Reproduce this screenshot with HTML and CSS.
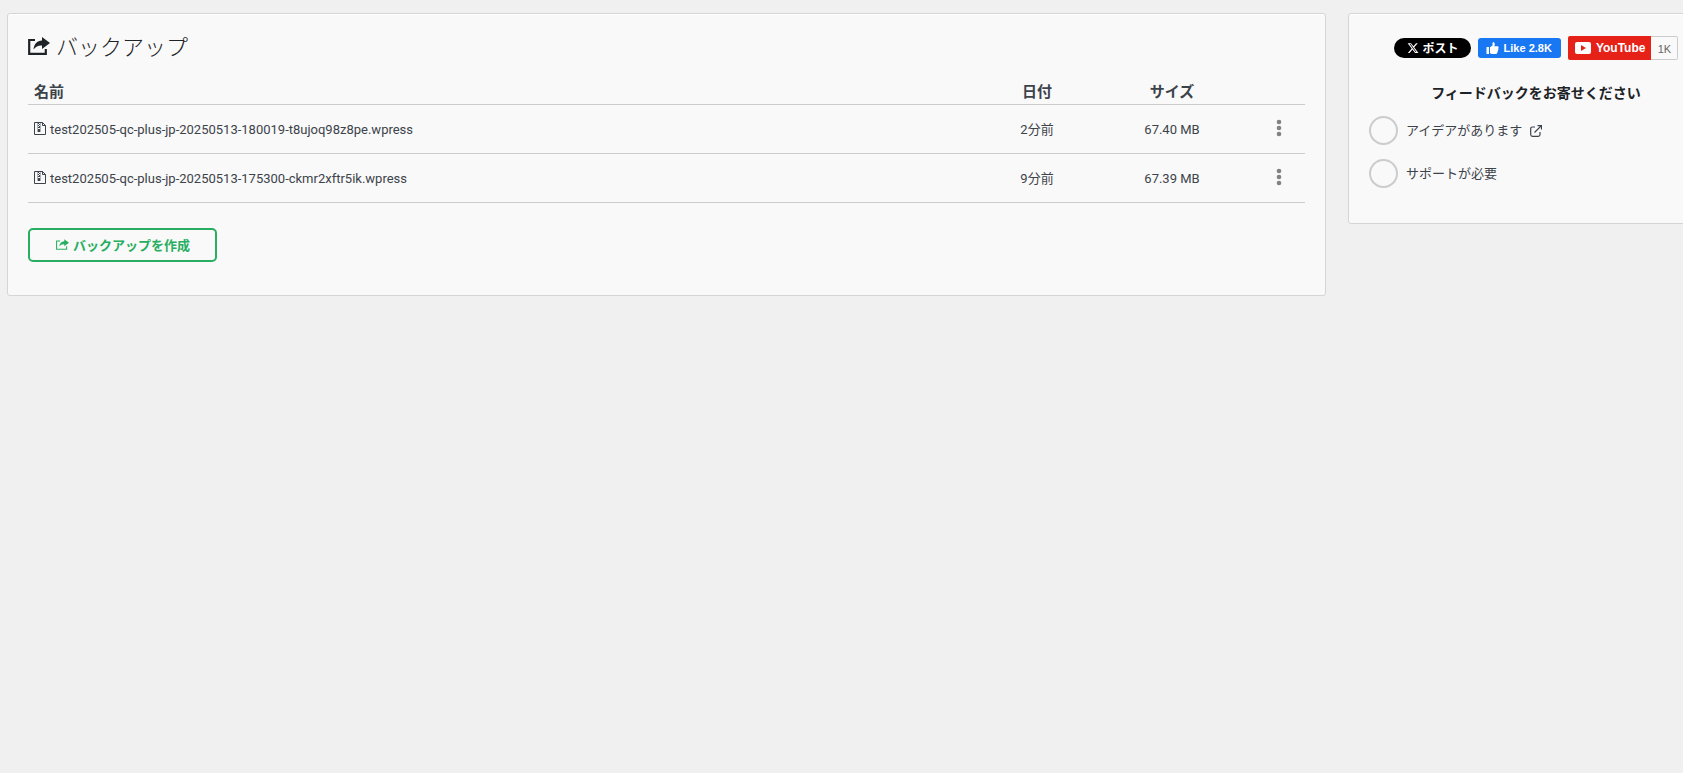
FILE: index.html
```html
<!DOCTYPE html>
<html lang="ja">
<head>
    <meta charset="UTF-8">
    <meta name="viewport" content="width=device-width, initial-scale=1.0">
    <title>バックアップ</title>
    <link rel="stylesheet" href="styles.css">
</head>
<body>
    <svg class="sprite" aria-hidden="true">
        <symbol id="icon-export" viewBox="0 0 22 18">
            <path d="M7 3H1.2v13.8h16.6V12" fill="none" stroke="currentColor" stroke-width="2.2"/>
            <path d="M14 0l8 6-8 6V8.500C10 8.300 8 9.500 5.500 12.500 6 7 9 3.600 14 3.400z" fill="currentColor"/>
        </symbol>
        <symbol id="icon-export-thin" viewBox="0 0 22 18">
            <path d="M7 3H1v14h17V12" fill="none" stroke="currentColor" stroke-width="1.800"/>
            <path d="M14 0l8 6-8 6V8.500C10 8.300 8 9.500 5.500 12.500 6 7 9 3.600 14 3.400z" fill="currentColor"/>
        </symbol>
        <symbol id="icon-zip" viewBox="0 0 12 13">
            <path d="M.5.5h8l3 3v9H.5z" fill="none" stroke="currentColor"/>
            <path d="M8.500.5v3h3" fill="none" stroke="currentColor"/>
            <path d="M4 1h1v1H4zM5 2h1v1H5zM4 3h1v1H4zM5 4h1v1H5zM4 5h2v1H4zM4 7h2v3H4z" fill="currentColor"/>
            <path d="M3.500 1v9M6.500 1v9" fill="none" stroke="currentColor" stroke-width=".4"/>
        </symbol>
        <symbol id="icon-dots" viewBox="0 0 6 18">
            <circle cx="3" cy="3" r="2.300"/>
            <circle cx="3" cy="9" r="2.300"/>
            <circle cx="3" cy="15" r="2.300"/>
        </symbol>
    </svg>

    <div class="container">
        <main class="card">
            <h1><svg class="title-icon"><use href="#icon-export"/></svg>バックアップ</h1>
            <table class="backups">
                <thead>
                    <tr>
                        <th class="col-name">名前</th>
                        <th class="col-date">日付</th>
                        <th class="col-size">サイズ</th>
                        <th class="col-actions"></th>
                    </tr>
                </thead>
                <tbody>
                    <tr>
                        <td class="col-name"><svg class="file-icon"><use href="#icon-zip"/></svg>test202505-qc-plus-jp-20250513-180019-t8ujoq98z8pe.wpress</td>
                        <td>2分前</td>
                        <td>67.40 MB</td>
                        <td><button class="dots" aria-label="メニュー"><svg><use href="#icon-dots"/></svg></button></td>
                    </tr>
                    <tr>
                        <td class="col-name"><svg class="file-icon"><use href="#icon-zip"/></svg>test202505-qc-plus-jp-20250513-175300-ckmr2xftr5ik.wpress</td>
                        <td>9分前</td>
                        <td>67.39 MB</td>
                        <td><button class="dots" aria-label="メニュー"><svg><use href="#icon-dots"/></svg></button></td>
                    </tr>
                </tbody>
            </table>
            <button class="create-btn"><svg><use href="#icon-export-thin"/></svg>バックアップを作成</button>
        </main>

        <aside class="card sidebar">
            <div class="share">
                <a class="share-x" href="#">
                    <svg viewBox="0 0 24 24"><path d="M18.244 2.250h3.308l-7.227 8.260 8.502 11.240H16.170l-5.214-6.817L4.990 21.750H1.680l7.730-8.835L1.254 2.250H8.080l4.713 6.231zm-1.161 17.520h1.833L7.084 4.126H5.117z"/></svg>ポスト
                </a>
                <a class="share-fb" href="#">
                    <svg viewBox="0 0 12 12"><path d="M0 5h2.500v7H0zM3.500 5.300L6 3.500V.8C6 0 8.300-.2 8.300 2c0 1-.3 1.700-.5 2.300h3c1.500 0 1.500 1.500.9 2 .5.600.3 1.500-.3 1.900.3.700 0 1.400-.6 1.700.2.900-.2 2.100-1.500 2.100H6c-1 0-1.500-.5-2.500-.8z"/></svg>Like 2.8K
                </a>
                <div class="share-yt">
                    <a href="#"><svg viewBox="0 0 16 12"><rect width="16" height="12" rx="2" fill="#fff"/><path d="M6 3l5 3-5 3z" fill="#e62117"/></svg>YouTube</a>
                    <span>1K</span>
                </div>
            </div>
            <h2>フィードバックをお寄せください</h2>
            <div class="feedback">
                <input type="radio" name="feedback" id="idea">
                <label for="idea">アイデアがあります</label>
                <svg viewBox="0 0 12 12"><path d="M5 2H2.500Q.7 2 .7 3.800v5.700q0 1.800 1.800 1.800h5.700q1.800 0 1.800-1.800V7M7.500.6h4v4M11.400.6L4.500 7.500" fill="none" stroke="currentColor" stroke-width="1.200"/></svg>
            </div>
            <div class="feedback">
                <input type="radio" name="feedback" id="help">
                <label for="help">サポートが必要</label>
            </div>
        </aside>
    </div>
</body>
</html>
```
FILE: styles.css
```css
* {
    box-sizing: border-box;
}
body {
    margin: 0;
    background: #f0f0f0;
    color: #3c434a;
    font-family: "Noto Sans CJK JP", sans-serif;
    font-size: 13px;
    line-height: 20px;
    overflow-x: hidden;
}
.sprite {
    display: none;
}
.container {
    display: flex;
    align-items: flex-start;
    gap: 22px;
    padding: 13px 0 0 7px;
    /* the sidebar runs past the right edge of the window */
    margin-right: -41px;
}
.card {
    flex: 1;
    background: #f9f9f9;
    border: 1px solid #d5d5d5;
    border-radius: 3px;
    padding: 20px;
    box-shadow: inset 0 1px 0 #fff;
}
main.card {
    padding-top: 18px;
}
h1 {
    display: flex;
    align-items: center;
    gap: 6px;
    margin: 0 0 12px;
    color: #1d2327;
    font-size: 22px;
    font-weight: 200;
    line-height: 26px;
}
.title-icon {
    width: 22px;
    height: 18px;
    margin-top: 2px;
}
.backups {
    width: 100%;
    table-layout: fixed;
    border-collapse: collapse;
    text-align: center;
}
.backups th {
    height: 34px;
    padding: 8px 0 0;
    font-size: 15px;
    font-weight: 700;
    border-bottom: 1px solid #ccc;
}
.backups td {
    height: 49px;
    padding: 2px 0 0;
    border-bottom: 1px solid #ccc;
    font-family: Roboto, "Noto Sans CJK JP", sans-serif;
}
.backups .col-name {
    padding-left: 6px;
    text-align: left;
}
.col-date {
    width: 108px;
}
.col-size {
    width: 162px;
}
.col-actions {
    width: 52px;
}
.file-icon {
    width: 12px;
    height: 13px;
    margin-right: 4px;
    vertical-align: -1px;
}
.dots {
    padding: 2px 0 0;
    border: none;
    background: none;
    cursor: pointer;
}
.dots svg {
    display: block;
    width: 6px;
    height: 18px;
    fill: #828282;
}
.create-btn {
    display: flex;
    align-items: center;
    gap: 4px;
    height: 34px;
    margin: 25px 0 13px;
    padding: 0 25px 0 26px;
    border: 2px solid #27ae60;
    border-radius: 5px;
    background: transparent;
    color: #27ae60;
    font-family: inherit;
    font-size: 13px;
    line-height: 20px;
    font-weight: 700;
    cursor: pointer;
}
.create-btn svg {
    width: 13px;
    height: 11px;
}
.sidebar {
    flex: none;
    width: 376px;
    min-height: 211px;
}
.share {
    display: flex;
    justify-content: center;
    align-items: center;
    gap: 7px;
    margin-top: 2px;
    font-size: 11px;
    font-weight: 700;
}
.share a {
    display: flex;
    align-items: center;
    color: #fff;
    text-decoration: none;
}
.share .share-x {
    height: 20px;
    padding: 0 12px 0 13px;
    gap: 4px;
    border-radius: 10px;
    background: #000;
    font-size: 12px;
}
.share-x svg {
    width: 12px;
    height: 12px;
    fill: #fff;
}
.share .share-fb {
    height: 20px;
    padding: 0 9px 0 8px;
    gap: 5px;
    border-radius: 3px;
    background: #1877f2;
    font-family: "Liberation Sans", sans-serif;
}
.share-fb svg {
    width: 13px;
    height: 12px;
    fill: #fff;
}
.share-yt {
    display: flex;
    height: 24px;
    font-family: "Liberation Sans", sans-serif;
}
.share-yt a {
    padding: 0 6px 0 7px;
    gap: 5px;
    border-radius: 2px 0 0 2px;
    background: #e62117;
    font-size: 12px;
}
.share-yt svg {
    width: 16px;
    height: 12px;
}
.share-yt span {
    width: 27px;
    border: 1px solid #ccc;
    border-left: none;
    border-radius: 0 2px 2px 0;
    color: #666;
    font-weight: 400;
    line-height: 24px;
    text-align: center;
}
h2 {
    margin: 22px 0 14px;
    color: #1d2327;
    font-size: 14px;
    font-weight: 700;
    line-height: 20px;
    text-align: center;
}
.feedback {
    display: flex;
    align-items: center;
    gap: 8px;
    margin-bottom: 14px;
}
.feedback label {
    padding-bottom: 1px;
}
.feedback input {
    appearance: none;
    width: 29px;
    height: 29px;
    margin: 0;
    border: 2px solid #ccc;
    border-radius: 50%;
}
.feedback svg {
    width: 12px;
    height: 12px;
}
```
